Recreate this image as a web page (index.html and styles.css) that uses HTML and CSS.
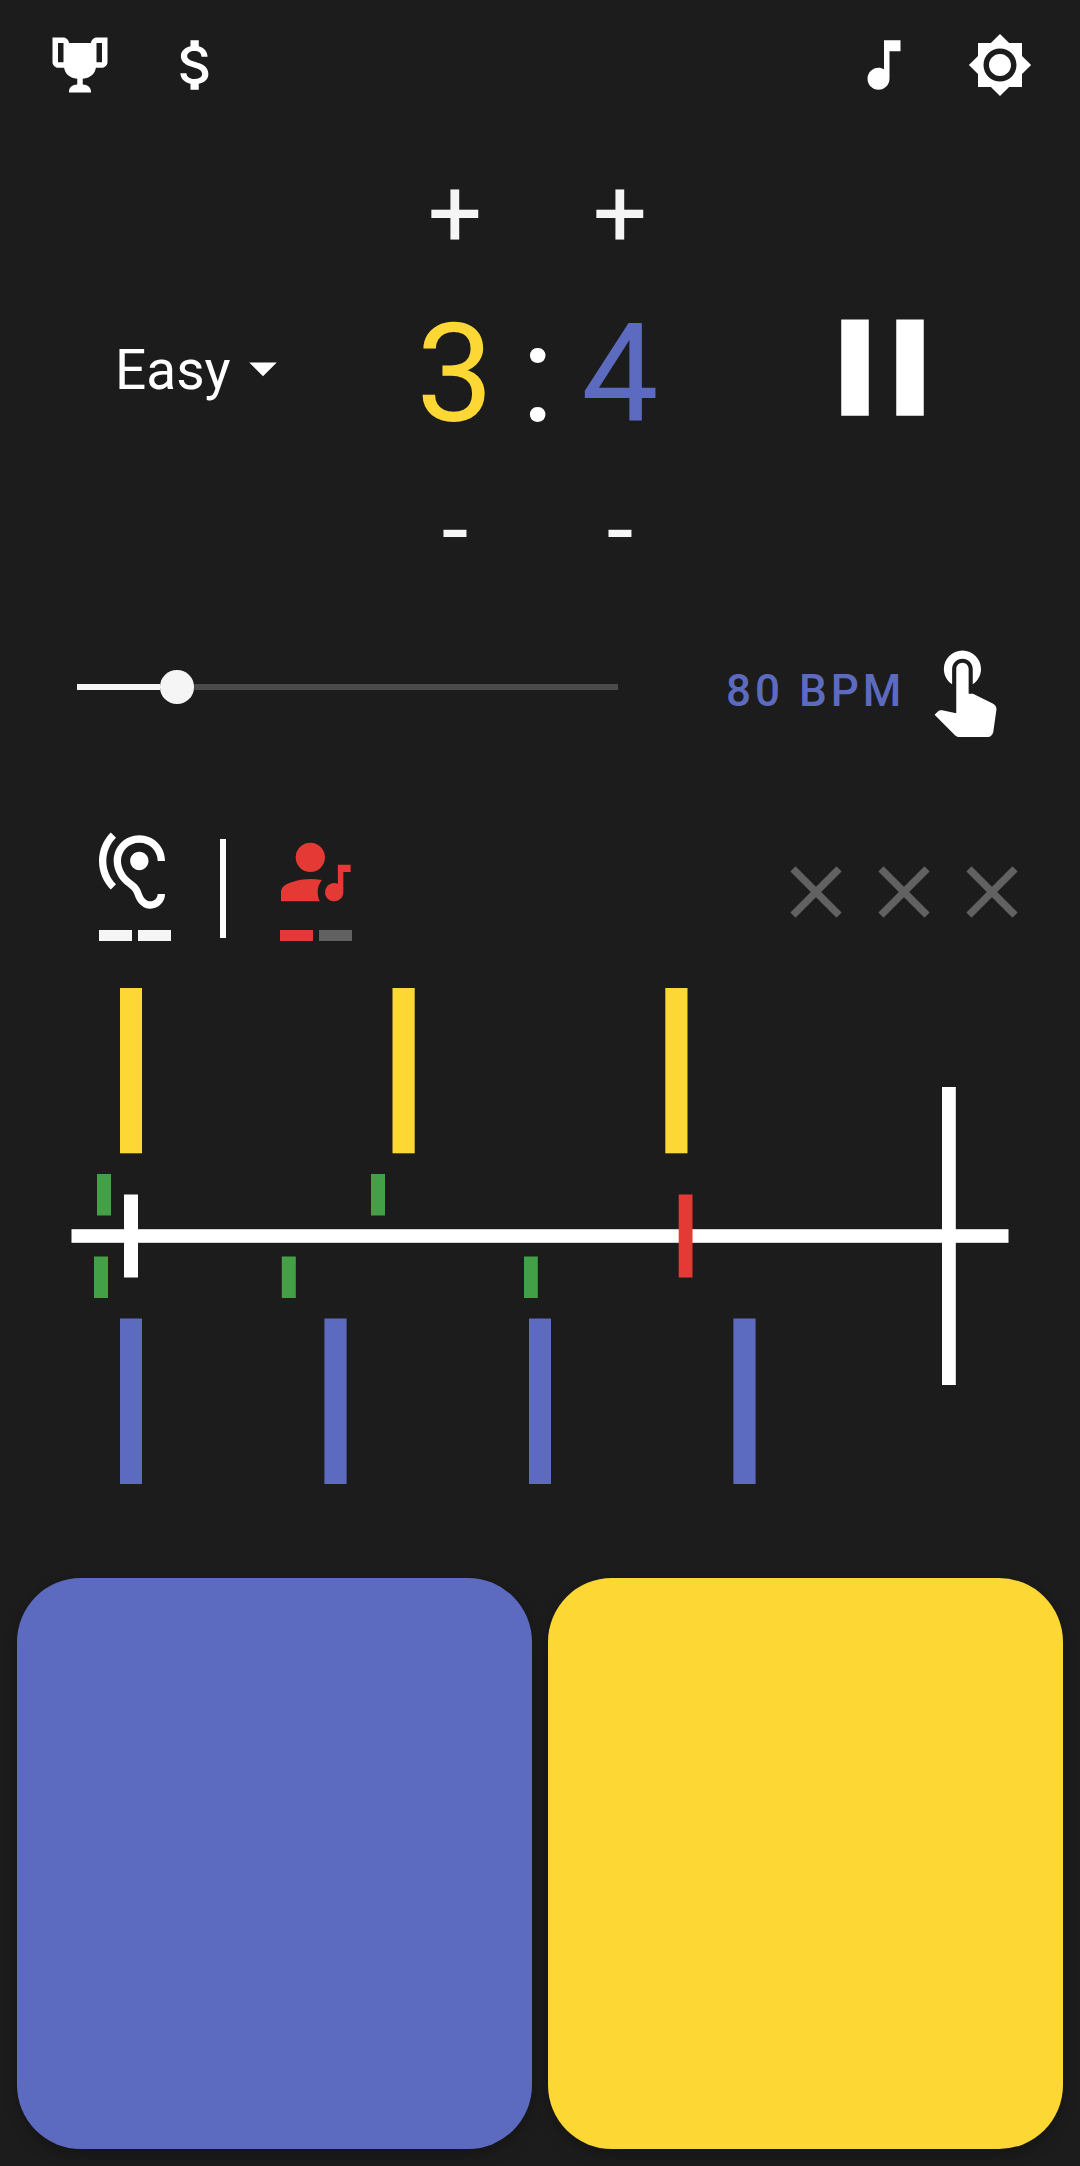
FILE: index.html
```html
<!DOCTYPE html>
<html lang="en">
<head>
<meta charset="utf-8">
<title>Polyrhythm Trainer</title>
<link rel="stylesheet" href="styles.css">
</head>
<body>
<main class="app">
  <header class="topbar">
    <div class="topbar-group">
      <svg class="icon" viewBox="0 0 24 24"><path d="M20.2,2H19.5H18C17.1,2 16,3 16,4H8C8,3 6.9,2 6,2H4.5H3.8H2V11C2,12 3,13 4,13H6.2C6.6,15 7.9,16.7 11,17V19.1C8.8,19.3 8,20.4 8,21.7V22H16V21.7C16,20.4 15.2,19.3 13,19.1V17C16.1,16.7 17.4,15 17.8,13H20C21,13 22,12 22,11V2H20.2M4,11V4H6V6V11C5.1,11 4.3,11 4,11M20,11C19.7,11 18.9,11 18,11V6V4H20V11Z"/></svg>
      <svg class="icon" viewBox="0 0 24 24"><path d="M11.8 10.9c-2.27-.59-3-1.2-3-2.15 0-1.09 1.01-1.85 2.7-1.85 1.78 0 2.44.85 2.5 2.1h2.21c-.07-1.72-1.12-3.3-3.21-3.81V3h-3v2.16c-1.94.42-3.5 1.68-3.5 3.61 0 2.31 1.91 3.46 4.7 4.13 2.5.6 3 1.48 3 2.41 0 .69-.49 1.79-2.7 1.79-2.06 0-2.87-.92-2.98-2.1h-2.2c.12 2.19 1.76 3.42 3.68 3.83V21h3v-2.15c1.95-.37 3.5-1.5 3.5-3.55 0-2.84-2.43-3.81-4.7-4.4z"/></svg>
    </div>
    <div class="topbar-group">
      <svg class="icon" viewBox="0 0 24 24"><path d="M12 3v10.55c-.59-.34-1.27-.55-2-.55-2.21 0-4 1.79-4 4s1.79 4 4 4 4-1.79 4-4V7h4V3h-6z"/></svg>
      <svg class="icon" viewBox="0 0 24 24"><path d="M20 8.69V4h-4.69L12 .69 8.69 4H4v4.69L.69 12 4 15.31V20h4.69L12 23.31 15.31 20H20v-4.69L23.31 12 20 8.69zM12 18c-3.31 0-6-2.69-6-6s2.69-6 6-6 6 2.69 6 6-2.69 6-6 6zm0-10c-2.21 0-4 1.79-4 4s1.79 4 4 4 4-1.79 4-4-1.79-4-4-4z"/></svg>
    </div>
  </header>

  <section class="controls">
    <div class="difficulty">
      <span class="difficulty-label">Easy</span>
      <svg class="icon caret" viewBox="0 0 24 24"><path d="M7 10l5 5 5-5z"/></svg>
    </div>
    <div class="ratio">
      <div class="stepper">
        <button class="step">+</button>
        <span class="digit three">3</span>
        <button class="step step-down">-</button>
      </div>
      <span class="digit colon">:</span>
      <div class="stepper">
        <button class="step">+</button>
        <span class="digit four">4</span>
        <button class="step step-down">-</button>
      </div>
    </div>
    <svg class="pause" viewBox="0 0 24 24"><path d="M6 19h4V5H6v14zm8-14v14h4V5h-4z"/></svg>
  </section>

  <section class="tempo">
    <div class="slider">
      <div class="slider-fill"></div>
      <div class="slider-thumb"></div>
      <div class="slider-rest"></div>
    </div>
    <span class="bpm">80 BPM</span>
    <svg class="tap" viewBox="0 0 24 24"><path d="M9 11.24V7.5C9 6.12 10.12 5 11.5 5S14 6.12 14 7.5v3.74c1.21-.81 2-2.18 2-3.74C16 5.01 13.99 3 11.5 3S7 5.01 7 7.5c0 1.56.79 2.93 2 3.74zm9.84 4.63l-4.54-2.26c-.17-.07-.35-.11-.54-.11H13v-6c0-.83-.67-1.5-1.5-1.5S10 6.67 10 7.5v10.74l-3.43-.72c-.08-.01-.15-.03-.24-.03-.31 0-.59.13-.79.33l-.79.8 4.94 4.94c.27.27.65.44 1.06.44h6.79c.75 0 1.33-.55 1.44-1.28l.75-5.27c.01-.07.02-.14.02-.2 0-.62-.38-1.16-.91-1.38z"/></svg>
  </section>

  <section class="status">
    <div class="phase">
      <svg class="status-icon" viewBox="0 0 24 24"><path d="M17 20c-.29 0-.56-.06-.76-.15-.71-.37-1.21-.88-1.71-2.38-.51-1.56-1.47-2.29-2.39-3-.79-.61-1.61-1.24-2.32-2.53C9.29 10.98 9 9.93 9 9c0-2.8 2.2-5 5-5s5 2.2 5 5h2c0-3.93-3.07-7-7-7S7 5.07 7 9c0 1.26.38 2.65 1.07 3.9.91 1.65 1.98 2.48 2.85 3.15.81.62 1.39 1.07 1.71 2.05.6 1.82 1.37 2.84 2.73 3.55.51.23 1.07.35 1.64.35 2.21 0 4-1.79 4-4h-2c0 1.1-.9 2-2 2zM7.64 2.64L6.22 1.22C4.23 3.21 3 5.96 3 9s1.23 5.79 3.22 7.78l1.41-1.41C6.01 13.74 5 11.49 5 9s1.01-4.74 2.64-6.36zM11.5 9c0 1.38 1.12 2.5 2.5 2.5s2.5-1.12 2.5-2.5-1.12-2.5-2.5-2.5-2.5 1.12-2.5 2.5z"/></svg>
      <div class="marks"><i class="mark"></i><i class="mark"></i></div>
    </div>
    <div class="divider"></div>
    <div class="phase play">
      <svg class="status-icon" viewBox="0 0 24 24"><circle cx="11" cy="8" r="4"/><path d="M11 13.9c-2.7 0-5.2.8-6.6 1.5C3.5 15.9 3 16.6 3 17.4V20h10.6c-.4-.8-.6-1.6-.6-2.5 0-1.25.43-2.4 1.15-3.3-1.1-.2-2.15-.3-3.15-.3zM18.5 10v5.21A2.5 2.5 0 1 0 20 17.5V12h2v-2z"/></svg>
      <div class="marks"><i class="mark"></i><i class="mark off"></i></div>
    </div>
    <div class="misses">
      <svg class="miss" viewBox="0 0 24 24"><path d="M19 6.41L17.59 5 12 10.59 6.41 5 5 6.41 10.59 12 5 17.59 6.41 19 12 13.41 17.59 19 19 17.59 13.41 12z"/></svg>
      <svg class="miss" viewBox="0 0 24 24"><path d="M19 6.41L17.59 5 12 10.59 6.41 5 5 6.41 10.59 12 5 17.59 6.41 19 12 13.41 17.59 19 19 17.59 13.41 12z"/></svg>
      <svg class="miss" viewBox="0 0 24 24"><path d="M19 6.41L17.59 5 12 10.59 6.41 5 5 6.41 10.59 12 5 17.59 6.41 19 12 13.41 17.59 19 19 17.59 13.41 12z"/></svg>
    </div>
  </section>

  <svg class="timeline" viewBox="0 0 1080 496">
    <!-- top voice -->
    <g class="top-voice">
      <rect x="120" y="0" width="22" height="165.3"/>
      <rect x="392.5" y="0" width="22.2" height="165.3"/>
      <rect x="665.3" y="0" width="22.2" height="165.3"/>
    </g>
    <!-- bottom voice -->
    <g class="bottom-voice">
      <rect x="120" y="330.5" width="22" height="165.5"/>
      <rect x="324.4" y="330.5" width="22.2" height="165.5"/>
      <rect x="529" y="330.5" width="22" height="165.5"/>
      <rect x="733.4" y="330.5" width="22.2" height="165.5"/>
    </g>
    <!-- axis -->
    <g class="axis">
      <rect x="71.5" y="241.2" width="937" height="13.6"/>
      <rect x="942" y="99" width="13.8" height="298"/>
      <rect x="124" y="206.5" width="14" height="83"/>
    </g>
    <!-- taps -->
    <g class="hit">
      <rect x="97" y="186" width="14" height="41.5"/>
      <rect x="371" y="186" width="14" height="41.5"/>
      <rect x="94" y="268.5" width="14" height="41.5"/>
      <rect x="281.8" y="268.5" width="14" height="41.5"/>
      <rect x="524" y="268.5" width="13.8" height="41.5"/>
    </g>
    <rect class="playhead" x="678.7" y="206.5" width="13.8" height="83"/>
  </svg>

  <section class="pads">
    <button class="pad pad-left"></button>
    <button class="pad pad-right"></button>
  </section>
</main>
</body>
</html>
```
FILE: styles.css
```css
* { box-sizing: border-box; }

body {
  margin: 0;
  background: #1c1c1c;
  color: #fff;
  font-family: Roboto, "Liberation Sans", sans-serif;
}

button {
  margin: 0;
  padding: 0;
  border: 0;
  background: none;
  color: inherit;
  font: inherit;
}

svg { display: block; flex: none; fill: currentColor; }

.app {
  display: flex;
  flex-direction: column;
  width: 1080px;
  height: 2166px;
  overflow: hidden;
}

.topbar {
  display: flex;
  justify-content: space-between;
  height: 148px;
  padding: 31.7px 47px 0;
}
.topbar-group { display: flex; gap: 50px; }
.icon { width: 66px; height: 66px; }

.controls {
  display: flex;
  align-items: center;
  height: 440px;
  padding: 0 115px 0 115px;
}
.difficulty {
  display: flex;
  align-items: center;
  width: 274px;
  font-size: 55px;
  line-height: 66px;
}
.difficulty-label { padding-top: 3px; }
.caret { margin: 0 0 1px -1px; }
.ratio {
  display: flex;
  align-items: flex-start;
  width: 297px;
}
.stepper {
  display: flex;
  flex-direction: column;
  align-items: center;
  width: 132px;
}
.step {
  width: 132px;
  height: 132px;
  color: #f5f5f5;
  font-size: 96px;
  line-height: 132px;
}
.step-down { height: 119px; line-height: 122px; }
.digit {
  font-size: 137.5px;
  line-height: 189px;
}
.colon { width: 33px; margin-top: 132px; }
.three { color: #fdd835; }
.four { color: #5c6bc0; }
.pause { width: 165px; height: 165px; margin: 0 0 1px auto; }

.tempo {
  display: flex;
  align-items: center;
  height: 198px;
  padding-left: 77px;
}
.slider {
  display: flex;
  align-items: center;
  width: 541px;
}
.slider-fill { width: 83px; height: 6px; background: #f5f5f5; }
.slider-thumb { width: 33.5px; height: 33.5px; border-radius: 50%; background: #f5f5f5; }
.slider-rest { flex: 1; height: 6px; background: #4a4a4a; }
.bpm {
  width: 189px;
  margin-left: 108px;
  padding-top: 7px;
  color: #5c6bc0;
  font-size: 44px;
  font-weight: 500;
  letter-spacing: 4px;
  white-space: nowrap;
}
.tap { width: 99px; height: 99px; }

.status {
  display: flex;
  height: 202px;
  padding: 42px 44px 0 88px;
}
.phase { display: flex; flex-direction: column; width: 88px; }
.status-icon { width: 88px; height: 88px; }
.marks { display: flex; gap: 6px; margin: 14px 0 0 11px; }
.mark { width: 33px; height: 11px; background: #f5f5f5; }
.divider { width: 6px; height: 99px; margin: 11px 44px 0; background: #fff; }
.play { color: #e53935; }
.play .marks { margin-left: 10px; }
.play .mark { background: #e53935; }
.play .mark.off { background: #616161; }
.misses {
  display: flex;
  margin: 20px 0 0 auto;
  color: #616161;
}
.miss { width: 88px; height: 88px; }

.timeline { width: 1080px; height: 496px; }
.top-voice { fill: #fdd835; }
.bottom-voice { fill: #5c6bc0; }
.axis { fill: #fff; }
.hit { fill: #43a047; }
.playhead { fill: #e53935; }

.pads {
  display: flex;
  gap: 16px;
  flex: 1;
  padding: 94px 17px 17.5px;
}
.pad {
  flex: 1;
  border-radius: 64px;
  box-shadow: 0 8px 14px rgba(0, 0, 0, .18), 0 2px 6px rgba(0, 0, 0, .06);
}
.pad-left { background: #5c6bc0; }
.pad-right { background: #fdd835; }
```
